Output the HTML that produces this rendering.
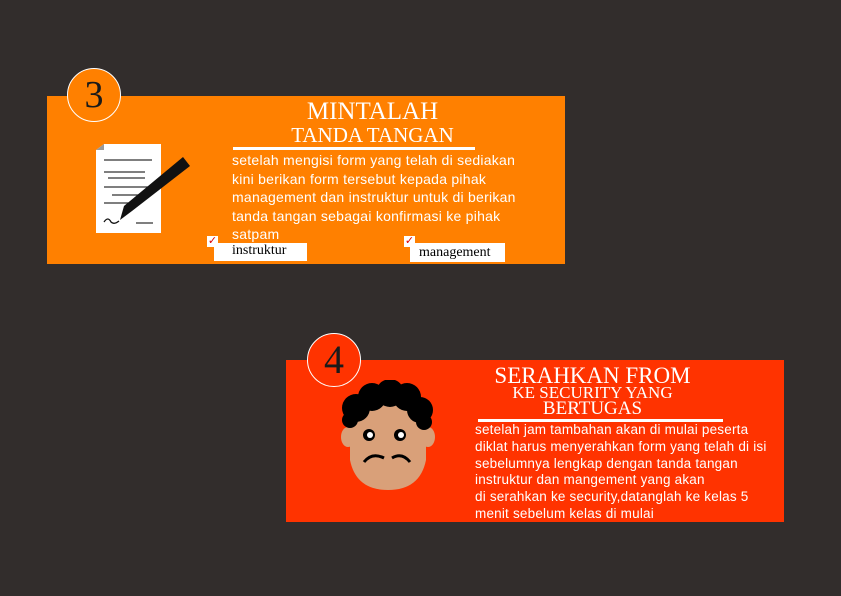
<!DOCTYPE html>
<html><head><style>
body{margin:0;width:841px;height:596px;background:#322d2c;position:relative;overflow:hidden;font-family:"Liberation Sans",sans-serif}
.a{position:absolute}
.serif{font-family:"Liberation Serif",serif;color:#fff;text-align:center;white-space:nowrap}
.body{color:#fff;font-size:13px;white-space:nowrap}
</style></head><body>
<div class="a" style="left:47px;top:96px;width:518px;height:168px;background:#ff8000"></div>
<div class="a" style="left:67px;top:68px;width:54px;height:54px;border-radius:50%;background:#ff8000;border:1.5px solid #fff;box-sizing:border-box;"></div>
<div class="a serif" style="left:67px;top:71px;width:54px;font-size:38px;color:#1a1a1a;line-height:48px">3</div>
<div class="a serif" style="left:260px;top:98px;width:225px;font-size:25px;line-height:28px">MINTALAH</div>
<div class="a serif" style="left:260px;top:123px;width:225px;font-size:21px;line-height:24px">TANDA TANGAN</div>
<div class="a" style="left:233px;top:147px;width:242px;height:3px;background:#fff"></div>
<div class="a body" style="left:232px;top:151px;line-height:18.6px;font-size:14px;letter-spacing:0.25px">setelah mengisi form yang telah di sediakan<br>kini berikan form tersebut kepada pihak<br>management dan instruktur untuk di berikan<br>tanda tangan sebagai konfirmasi ke pihak<br>satpam</div>
<div class="a" style="left:207px;top:236px;width:11px;height:11px;background:#fff;color:#d00;font-size:11px;line-height:10px;text-align:center">✓</div>
<div class="a" style="left:214px;top:243px;width:93px;height:18px;background:#fff;font-family:'Liberation Serif',serif;font-size:14px;line-height:16px;padding-left:18px;box-sizing:border-box">instruktur</div>
<div class="a" style="left:404px;top:236px;width:11px;height:11px;background:#fff;color:#d00;font-size:11px;line-height:10px;text-align:center">✓</div>
<div class="a" style="left:410px;top:243px;width:95px;height:19px;background:#fff;font-family:'Liberation Serif',serif;font-size:14px;line-height:19px;padding-left:9px;box-sizing:border-box">management</div>
<svg class="a" style="left:90px;top:140px" width="110" height="100" viewBox="90 140 110 100">
<path d="M96 150 L104 144 L161 144 L161 233 L96 233 Z" fill="#fff"/>
<path d="M96 150 L104 144 L104 150 Z" fill="#999"/>
<g stroke="#333" stroke-width="1.2"><line x1="104" y1="160" x2="152" y2="160"/><line x1="104" y1="172" x2="145" y2="172"/><line x1="108" y1="178" x2="145" y2="178"/><line x1="104" y1="187" x2="150" y2="187"/><line x1="112" y1="195" x2="140" y2="195"/><line x1="104" y1="203" x2="130" y2="203"/><line x1="136" y1="223" x2="153" y2="223"/></g>
<path d="M183 157 L190 166 L132 211 L120 220 L124 206 Z" fill="#111"/>
<path d="M104 222 q4 -6 7 0 q3 3 8 -1" stroke="#111" fill="none" stroke-width="1.3"/>
</svg>

<div class="a" style="left:286px;top:360px;width:498px;height:162px;background:#ff3300"></div>
<div class="a" style="left:307px;top:333px;width:54px;height:54px;border-radius:50%;background:#ff3300;border:1.5px solid #fff;box-sizing:border-box"></div>
<div class="a serif" style="left:307px;top:336px;width:54px;font-size:40px;color:#1a1a1a;line-height:48px">4</div>
<div class="a serif" style="left:475px;top:364px;width:235px;font-size:23px;line-height:24px">SERAHKAN FROM</div>
<div class="a serif" style="left:475px;top:384px;width:235px;font-size:17px;line-height:18px">KE SECURITY YANG</div>
<div class="a serif" style="left:475px;top:398px;width:235px;font-size:19px;line-height:22px">BERTUGAS</div>
<div class="a" style="left:478px;top:419px;width:245px;height:3px;background:#fff"></div>
<div class="a body" style="left:475px;top:422px;font-size:13.5px;letter-spacing:0.2px;line-height:16.8px">setelah jam tambahan akan di mulai peserta<br>diklat harus menyerahkan form yang telah di isi<br>sebelumnya lengkap dengan tanda tangan<br>instruktur dan mangement yang akan<br>di serahkan ke security,datanglah ke kelas 5<br>menit sebelum kelas di mulai</div>
<svg class="a" style="left:330px;top:380px" width="110" height="115" viewBox="330 380 110 115">
<ellipse cx="348" cy="437" rx="7" ry="10" fill="#d9a079"/>
<ellipse cx="428" cy="437" rx="7" ry="10" fill="#d9a079"/>
<path d="M350 410 Q350 395 388 395 Q426 395 426 410 L426 460 Q420 490 388 490 Q356 490 350 460 Z" fill="#d9a079"/>
<g fill="#000"><circle cx="356" cy="408" r="14"/><circle cx="372" cy="397" r="14"/><circle cx="390" cy="393" r="14"/><circle cx="407" cy="397" r="14"/><circle cx="420" cy="410" r="13"/><circle cx="350" cy="420" r="8"/><circle cx="424" cy="422" r="8"/></g>
<circle cx="369" cy="435" r="6" fill="#000"/><circle cx="370" cy="435" r="3" fill="#fff"/>
<circle cx="400" cy="435" r="6" fill="#000"/><circle cx="401" cy="435" r="3" fill="#fff"/>
<path d="M364 462 Q372 452 384 458 M392 458 Q402 452 410 462" stroke="#000" stroke-width="3" fill="none"/>
</svg>
</body></html>
